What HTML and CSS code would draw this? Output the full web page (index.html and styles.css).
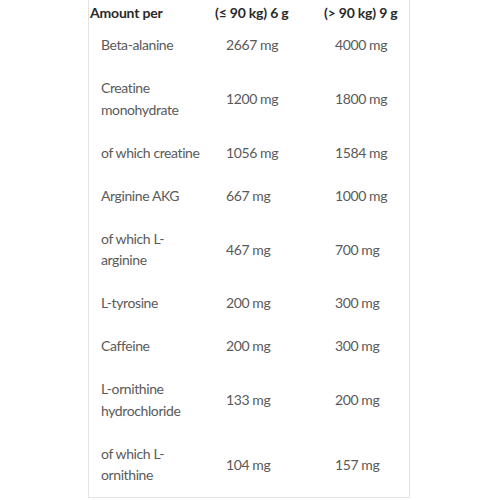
FILE: index.html
```html
<!DOCTYPE html>
<html>
<head>
<meta charset="utf-8">
<link rel="stylesheet" href="styles.css">
</head>
<body>
<div class="panel">
  <div class="row head">
    <div class="cell">Amount per</div>
    <div class="cell">(≤ 90 kg) 6 g</div>
    <div class="cell">(&gt; 90 kg) 9 g</div>
  </div>
  <div class="row"><div class="cell">Beta-alanine</div><div class="cell">2667 mg</div><div class="cell">4000 mg</div></div>
  <div class="row"><div class="cell">Creatine monohydrate</div><div class="cell">1200 mg</div><div class="cell">1800 mg</div></div>
  <div class="row"><div class="cell">of which creatine</div><div class="cell">1056 mg</div><div class="cell">1584 mg</div></div>
  <div class="row"><div class="cell">Arginine AKG</div><div class="cell">667 mg</div><div class="cell">1000 mg</div></div>
  <div class="row"><div class="cell">of which L-arginine</div><div class="cell">467 mg</div><div class="cell">700 mg</div></div>
  <div class="row"><div class="cell">L-tyrosine</div><div class="cell">200 mg</div><div class="cell">300 mg</div></div>
  <div class="row"><div class="cell">Caffeine</div><div class="cell">200 mg</div><div class="cell">300 mg</div></div>
  <div class="row"><div class="cell">L-ornithine hydrochloride</div><div class="cell">133 mg</div><div class="cell">200 mg</div></div>
  <div class="row"><div class="cell">of which L-ornithine</div><div class="cell">104 mg</div><div class="cell">157 mg</div></div>
</div>
</body>
</html>
```

FILE: styles.css
```css
html, body {
  margin: 0;
  padding: 0;
  background: #ffffff;
}
body {
  font-family: Lato, "Liberation Sans", sans-serif;
  font-size: 14px;
  line-height: 21.6px;
  letter-spacing: -0.4px;
  color: #5a5a5a;
}
.panel {
  margin-left: 88px;
  width: 320px;
  border: 1px solid #e3e3e3;
  border-top: none;
}
.row {
  display: grid;
  grid-template-columns: 125px 109px 86px;
  align-items: center;
}
.row .cell {
  padding: 10.7px 9px 10.7px 12px;
}
.row.head .cell {
  padding: 2px 0 0 1px;
  font-weight: 700;
  color: #2a2a2a;
  letter-spacing: -0.2px;
}
```
